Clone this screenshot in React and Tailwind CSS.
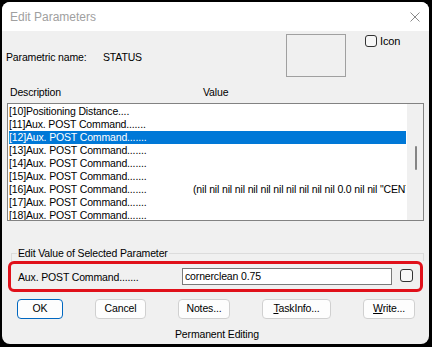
import React from 'react';

const rows = [
  { id: 10, label: 'Positioning Distance....', value: '' },
  { id: 11, label: 'Aux. POST Command.......', value: '' },
  { id: 12, label: 'Aux. POST Command.......', value: '', selected: true },
  { id: 13, label: 'Aux. POST Command.......', value: '' },
  { id: 14, label: 'Aux. POST Command.......', value: '' },
  { id: 15, label: 'Aux. POST Command.......', value: '' },
  {
    id: 16,
    label: 'Aux. POST Command.......',
    value: '(nil nil nil nil nil nil nil nil nil nil nil 0.0 nil nil "CENTER" nil)',
  },
  { id: 17, label: 'Aux. POST Command.......', value: '' },
  { id: 18, label: 'Aux. POST Command.......', value: '' },
];

function Button({ children, primary, className = '' }) {
  return (
    <div
      className={`h-[20px] flex items-center justify-center rounded-[4px] bg-[#fdfdfd] border ${
        primary ? 'border-[#0067c0]' : 'border-[#d0d0d0]'
      } ${className}`}
    >
      {children}
    </div>
  );
}

export default function App() {
  return (
    <div
      className="w-[432px] h-[347px] bg-black pt-[2px] pl-[2px] pr-[3px] pb-[3px] text-[10.5px] tracking-[-0.15px] text-black"
      style={{ fontFamily: '"Liberation Sans", Arial, sans-serif' }}
    >
      <div className="h-full rounded-[8px] overflow-hidden bg-[#f0f0f0] flex flex-col">
        {/* ── Title bar ─────────────────────────────────────── */}
        <div className="h-[29px] bg-white flex items-center justify-between pl-[8px] pr-[7px] shrink-0">
          <span className="text-[12px] tracking-normal text-[#a0a0a0] leading-none">Edit Parameters</span>
          <svg width="10" height="10" viewBox="0 0 10 10" className="mr-[2px]">
            <path d="M0.5 0.5 L9.5 9.5 M9.5 0.5 L0.5 9.5" stroke="#8a8a8a" strokeWidth="1" />
          </svg>
        </div>

        {/* ── Name + icon ───────────────────────────────────── */}
        <div className="h-[49px] flex items-start shrink-0">
          <div className="w-[97px] ml-[4px] mt-[19px] leading-[14px]">Parametric name:</div>
          <div className="w-[183px] mt-[19px] leading-[14px]">STATUS</div>
          <div className="w-[60px] h-[43px] mt-[3px] border border-[#a0a0a0]" />
          <div className="ml-[19px] mt-[4px] w-[12px] h-[12px] rounded-[3px] border border-[#333] bg-[#f7f7f7]" />
          <div className="ml-[3px] mt-[3px] leading-[14px] text-[11px]">Icon</div>
        </div>

        {/* ── Column headers ────────────────────────────────── */}
        <div className="h-[23px] flex items-start pt-[5px] leading-[14px] shrink-0">
          <div className="w-[193px] ml-[8px]">Description</div>
          <div>Value</div>
        </div>

        {/* ── Parameter list ────────────────────────────────── */}
        <div className="mx-[5px] h-[118px] border border-[#828282] bg-white flex shrink-0">
          <div className="flex-1 overflow-hidden pt-[1px] px-[1px]">
            {rows.map((r) => (
              <div
                key={r.id}
                className={`h-[13px] leading-[13px] flex whitespace-nowrap ${
                  r.selected ? 'bg-[#0078d7] text-white' : ''
                }`}
              >
                <div className="w-[184px] shrink-0">
                  [{r.id}]{r.label}
                </div>
                <div className="overflow-hidden">{r.value}</div>
              </div>
            ))}
          </div>
          <div className="w-[16px] bg-[#f0f0f0] flex justify-center pt-[42px]">
            <div className="w-[2px] h-[24px] bg-[#858585] rounded-full ml-[1px]" />
          </div>
        </div>

        {/* ── Edit value group ──────────────────────────────── */}
        <div className="mt-[25px] h-[15px] flex items-start ml-[9px] mr-[5px] shrink-0">
          <div className="mt-[7px] w-[6px] h-[8px] border-t border-l border-[#dcdcdc]" />
          <div className="leading-[15px] px-[1px]">Edit Value of Selected Parameter</div>
          <div className="mt-[7px] flex-1 h-[8px] border-t border-r border-[#dcdcdc]" />
        </div>
        <div className="mx-[6px] h-[31px] border-[3px] border-[#e0101a] rounded-[6px] flex items-start pt-[4px] pl-[7px] shrink-0">
          <div className="w-[164px] mt-[2px] leading-[14px]">Aux. POST Command.......</div>
          <div className="w-[210px] h-[17px] border border-[#7a7a7a] bg-white pl-[2px] leading-[15px]">
            cornerclean 0.75
          </div>
          <div className="ml-[8px] mt-[1px] w-[13px] h-[13px] rounded-[3px] border border-[#333] bg-[#f7f7f7]" />
        </div>

        {/* ── Buttons ───────────────────────────────────────── */}
        <div className="mt-[7px] flex gap-[32px] pl-[15px] shrink-0">
          <Button primary className="w-[46px]">OK</Button>
          <Button className="w-[51px]">Cancel</Button>
          <Button className="w-[52px]">Notes...</Button>
          <Button className="w-[69px]">
            <span>
              <span className="underline">T</span>askInfo...
            </span>
          </Button>
          <Button className="w-[52px]">
            <span>
              <span className="underline">W</span>rite...
            </span>
          </Button>
        </div>

        <div className="mt-[8px] pl-[173px] leading-[14px]">Permanent Editing</div>
      </div>
    </div>
  );
}
